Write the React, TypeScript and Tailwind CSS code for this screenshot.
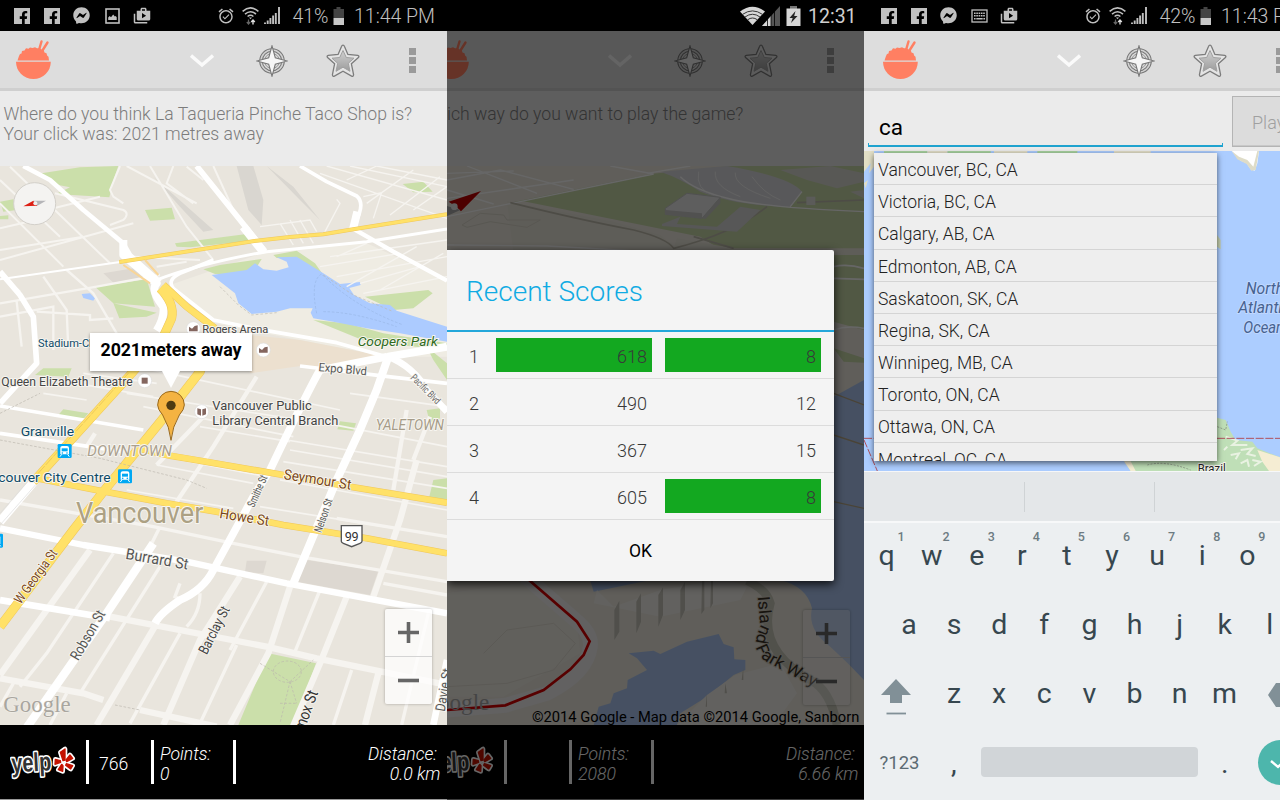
import React from "react";
import { FaFacebookF, FaFacebookMessenger } from "react-icons/fa";
import { MdAlarmOn, MdShop2 } from "react-icons/md";

/* ---------- status bar ---------- */

function FacebookBadge() {
  return (
    <div className="relative h-4 w-4 shrink-0 overflow-hidden bg-[#c0c0c0] text-black">
      <FaFacebookF className="absolute left-[4px] top-[3px] h-[14px] w-[11px]" />
    </div>
  );
}

function PictureIcon() {
  return (
    <svg className="h-4 w-[15px] shrink-0" viewBox="0 0 15 16">
      <rect x="1" y="1" width="13" height="14" fill="none" stroke="#c0c0c0" strokeWidth="1.6" />
      <path d="M3.2 12V9.6l1.5-1.7 1.3 1.3 2.2-2.6 1.6 2 .9-.7 1 1.4V12z" fill="#c0c0c0" />
    </svg>
  );
}

function KeyboardIcon() {
  return (
    <svg className="h-4 w-[17px] shrink-0" viewBox="0 0 17 16">
      <rect x="1" y="2" width="15" height="12" fill="none" stroke="#c0c0c0" strokeWidth="1.3" />
      <path d="M3 5.2h11M3 7.8h11" stroke="#c0c0c0" strokeWidth="1.5" strokeDasharray="1.6 .7" />
      <path d="M3 10.7h11" stroke="#c0c0c0" strokeWidth="1.5" strokeDasharray="1.6 .7 6.4 .7 1.6" />
    </svg>
  );
}

function WifiTransfer() {
  return (
    <svg className="h-[18px] w-[17px] shrink-0" viewBox="0 0 17 18">
      <g fill="none" stroke="#c0c0c0" strokeWidth="1.5">
        <path d="M.6 4.4Q8.5-2.6 16.4 4.4" />
        <path d="M3 7.1q5.5-4.8 11 0" />
        <path d="M5.6 9.5q2.9-2.4 5.8 0" />
      </g>
      <path d="M7 10.5h3l-1.5 1.8z" fill="#c0c0c0" />
      <path d="M6.5 12.5V17M4.8 15l1.7 2 1.7-2" fill="none" stroke="#666" strokeWidth="1.2" />
      <path d="M11 17.4v-4M9.2 15l1.8-2 1.8 2" fill="none" stroke="#ddd" strokeWidth="1.4" />
    </svg>
  );
}

function SignalBars() {
  return (
    <svg className="h-[17px] w-[17px] shrink-0" viewBox="0 0 17 17">
      <path
        d="M1 17v-1.5M3.7 17v-3.5M6.4 17v-6M9.1 17V8.5M11.8 17V6M15 17V0"
        stroke="#c0c0c0"
        strokeWidth="1.9"
      />
    </svg>
  );
}

function SamsungStatus({ battery, time, middle }: { battery: string; time: string; middle: React.ReactNode }) {
  return (
    <div className="flex h-[31px] w-[447px] shrink-0 items-center bg-black pl-[14px] text-[#c0c0c0]">
      <FacebookBadge />
      <div className="w-[14px] shrink-0" />
      <FacebookBadge />
      <FaFacebookMessenger className="ml-[13px] h-[17px] w-[17px] shrink-0" />
      <div className="ml-[14px] flex w-[17px] shrink-0 justify-center">{middle}</div>
      <MdShop2 className="ml-[12px] h-[18px] w-[18px] shrink-0" />
      <MdAlarmOn className="ml-[66px] h-[18px] w-[18px] shrink-0" />
      <div className="ml-[7px] flex shrink-0">
        <WifiTransfer />
      </div>
      <div className="ml-[5px] flex shrink-0">
        <SignalBars />
      </div>
      <span className="ml-[11.5px] mt-[2px] w-[40px] shrink-0 whitespace-nowrap text-[19.5px] font-light leading-none tracking-[-0.1px]">
        {battery}
      </span>
      <svg className="h-[18px] w-3 shrink-0" viewBox="0 0 12 18">
        <path d="M3.5 0h4v2H11v9H.5V2h3z" fill="#444" />
        <path d="M.5 11H11v7H.5z" fill="#c8c8c8" />
      </svg>
      <span className="ml-[9.5px] mt-[2px] shrink-0 whitespace-nowrap text-[19.5px] font-light leading-none">{time}</span>
    </div>
  );
}

function NexusStatus() {
  return (
    <div className="flex h-[31px] w-[417px] shrink-0 items-center bg-black pl-[293px] text-[#cfcfcf]">
      <svg className="h-5 w-10 shrink-0" viewBox="0 0 40 20">
        <path d="M0 5.5Q12.5-4 25 5.5L12.5 19z" fill="#d6d6d6" />
        <path d="M2.5 8.4q10-7 20 0M5 11q7.5-5.5 15 0M7.6 13.8q4.9-3.6 9.8 0" fill="none" stroke="#333" strokeWidth="1" />
        <path d="M22 20 40 0v20z" fill="#555" />
        <path d="M22 20l9-10v10z" fill="#d6d6d6" />
        <path d="M27.5 20V9M31 20V5M34.5 20V2" stroke="#000" strokeWidth=".8" />
      </svg>
      <svg className="ml-[6px] h-5 w-[15px] shrink-0" viewBox="0 0 15 20">
        <path d="M4 0h7v3H4z" fill="#777" />
        <path d="M.5 2.5h14V20H.5z" fill="#d6d6d6" />
        <path d="M9.500 5 3.500 12h3.200L5 17l6.500-7H8.200z" fill="#222" />
      </svg>
      <span className="ml-[7px] mt-[2px] text-[19.5px] leading-none">12:31</span>
    </div>
  );
}

/* ---------- action bar ---------- */

function Bowl() {
  return (
    <svg className="h-[40px] w-[36px] shrink-0" viewBox="0 0 36 40">
      <path d="M25.5 1.5 23 10M31.500 2.500 25.500 12" stroke="#ff7f62" strokeWidth="2.4" strokeLinecap="round" />
      <path
        d="M1.5 20.500 3 16l1-2 1.500-.5.5-2.500 2.500-.5L10 8.300l2.500.4 1.500-1.200 2.500.5L19 7.200l2 1h3l1.500 1.200 2.300.8.700 2.200 2 .8.600 2.300 1.400 1.200.500 3.800z"
        fill="#ff7f62"
      />
      <path d="M0 21.800h34.800a17.400 17.200 0 0 1-34.800 0z" fill="#ff7f62" />
    </svg>
  );
}

function CompassIcon() {
  return (
    <svg className="h-8 w-8 shrink-0" viewBox="0 0 32 32">
      <circle cx="16" cy="16" r="11" fill="none" stroke="#777" strokeWidth="3.6" />
      <circle cx="16" cy="16" r="11" fill="none" stroke="#d2d2d2" strokeWidth="1.5" />
      <circle cx="16" cy="16" r="7.5" fill="none" stroke="#999" strokeWidth="1" />
      <path
        d="M16 .8 19.300 12.700 31.200 16l-11.900 3.300L16 31.200l-3.300-11.900L.8 16l11.900-3.300z"
        fill="#f6f6f6"
        stroke="#777"
        strokeWidth="1.1"
      />
    </svg>
  );
}

function StarIcon({ id }: { id: string }) {
  return (
    <svg className="h-[34px] w-[34px] shrink-0" viewBox="0 0 34 34">
      <defs>
        <linearGradient id={id} x1="0" y1="0" x2="0" y2="1">
          <stop offset="0" stopColor="#d0d0d0" />
          <stop offset="1" stopColor="#9c9c9c" />
        </linearGradient>
      </defs>
      <path
        d="M17 1.200q1 0 1.500 1.300l3.400 8 9.800.8q2 .6.700 2.200l-7 6.300 2.200 11q-.2 2-2 1.300L17 27.200l-8.600 4.900q-1.800.7-2-1.300l2.200-11-7-6.300q-1.300-1.600.7-2.200l9.800-.8 3.400-8Q16 1.200 17 1.200z"
        fill="#e4e4e4"
        stroke="#7c7c7c"
        strokeWidth="1.3"
      />
      <path
        d="M17 6.500 20.300 13.500 28 14.200 22.300 19.300 24 27.300 17 23.200 10 27.300 11.700 19.300 6 14.200 13.700 13.500z"
        fill={`url(#${id})`}
        stroke="#a0a0a0"
        strokeWidth="1"
        strokeLinejoin="round"
      />
    </svg>
  );
}

function ActionBar({ id }: { id: string }) {
  return (
    <div className="flex h-[60px] w-[447px] shrink-0 items-center border-b-[3px] border-[#cfcfcf] bg-[#dddddd] pl-4">
      <Bowl />
      <svg className="ml-[138px] mt-[2px] h-[14px] w-6 shrink-0" viewBox="0 0 24 14">
        <path d="M1 1.500 12 11 23 1.500" fill="none" stroke="#fafafa" strokeWidth="3.4" />
      </svg>
      <div className="ml-[42px] mt-[2px] shrink-0">
        <CompassIcon />
      </div>
      <div className="ml-[37.5px] mt-[2px] shrink-0">
        <StarIcon id={id} />
      </div>
      <div className="ml-[49px] mt-[2px] flex shrink-0 flex-col gap-[2.5px]">
        <div className="h-[6.5px] w-[7px] bg-[#9a9a9a]" />
        <div className="h-[6.5px] w-[7px] bg-[#9a9a9a]" />
        <div className="h-[6.5px] w-[7px] bg-[#9a9a9a]" />
      </div>
    </div>
  );
}

/* ---------- footer ---------- */

function YelpLogo() {
  const petals = [
    "M-9-30 5-40 5-7-1-5z",
    "M8-7 20-22 28-12 10-2z",
    "M9 4 28 10 22 20 7 9z",
    "M-1 10-2 27-15 22-5 6z",
    "M-8 0-25 6-24-9-9-5z",
  ];
  return (
    <svg className="h-[38px] w-[66px] shrink-0" viewBox="0 0 198 114">
      <text
        transform="translate(5 88) rotate(-3)"
        textLength="120"
        lengthAdjust="spacingAndGlyphs"
        className="font-['Liberation_Sans',sans-serif] text-[78px] font-bold"
        fill="#333"
        stroke="#fff"
        strokeWidth="10"
        strokeLinejoin="round"
        paintOrder="stroke"
      >
        yelp
      </text>
      <g transform="translate(160 58)" strokeLinejoin="round">
        {petals.map((d) => (
          <path key={d} d={d} fill="#fff" stroke="#fff" strokeWidth="14" />
        ))}
        {petals.map((d) => (
          <path key={d} d={d} fill="#c41200" stroke="#c41200" strokeWidth="4" />
        ))}
      </g>
    </svg>
  );
}

function Footer({ count, points, distance }: { count: string; points: string; distance: string }) {
  return (
    <div className="flex h-[75px] w-[447px] shrink-0 items-start border-b border-[#999] bg-black pt-[15px] text-[17.6px] font-light leading-[20.5px] text-white">
      <div className="ml-[10px] mt-[3px]">
        <YelpLogo />
      </div>
      <div className="ml-[10px] h-11 w-[3px] shrink-0 bg-white" />
      <div className="w-[62px] pl-[10px] pt-[13.5px]">{count}</div>
      <div className="h-11 w-[3px] shrink-0 bg-white" />
      <div className="w-[79px] pl-[6px] pt-[3.5px] italic">
        Points:
        <br />
        {points}
      </div>
      <div className="h-11 w-[3px] shrink-0 bg-white" />
      <div className="ml-auto pr-[6.5px] pt-[3.5px] text-right italic">
        <span className="pr-[3.5px]">Distance:</span>
        <br />
        {distance}
      </div>
    </div>
  );
}

function ZoomControls({ faint = false }: { faint?: boolean }) {
  return (
    <div
      className={
        "flex h-[95px] w-[47px] flex-col rounded-[2px] shadow-[0_0_3px_rgba(0,0,0,0.3)] " +
        (faint ? "bg-white/30" : "bg-white/75")
      }
    >
      <div className="flex flex-1 items-center justify-center border-b border-[#d4d4d4]">
        <svg className="h-[21px] w-[21px]" viewBox="0 0 21 21">
          <path d="M10.500 0v21M0 10.500h21" stroke="#666" strokeWidth="3.6" />
        </svg>
      </div>
      <div className="flex flex-1 items-center justify-center">
        <svg className="h-[21px] w-[21px]" viewBox="0 0 21 21">
          <path d="M0 10.500h21" stroke="#666" strokeWidth="3.6" />
        </svg>
      </div>
    </div>
  );
}

/* ---------- maps ---------- */

type LabelProps = {
  x: number;
  y: number;
  size: number;
  len: number;
  fill: string;
  rotate?: number;
  italic?: boolean;
  weight?: number;
  halo?: string;
  children: string;
};

function Label({ x, y, size, len, fill, rotate = 0, italic, weight = 400, halo = "#f7f5f0", children }: LabelProps) {
  return (
    <text
      transform={`translate(${x} ${y}) rotate(${rotate})`}
      fontSize={size}
      textLength={len}
      lengthAdjust="spacingAndGlyphs"
      fontStyle={italic ? "italic" : "normal"}
      fontWeight={weight}
      fill={fill}
      stroke={halo}
      strokeWidth="6"
      strokeLinejoin="round"
      paintOrder="stroke"
    >
      {children}
    </text>
  );
}

function PlaceDot({ x, y, children }: { x: number; y: number; children: React.ReactNode }) {
  return (
    <g transform={`translate(${x} ${y})`}>
      <circle r="21" fill="#fff" stroke="#ddd" strokeWidth="2" />
      {children}
    </g>
  );
}

function TrainIcon({ x, y }: { x: number; y: number }) {
  return (
    <g transform={`translate(${x} ${y})`}>
      <rect x="-21" y="-21" width="42" height="42" rx="4" fill="#00a8f3" />
      <path d="M-13 10V-10Q-13-15-7-15H7Q13-15 13-10V10z" fill="#fff" />
      <path d="M-9-8H9V1H-9z" fill="#00a8f3" />
      <circle cx="-7" cy="6" r="2.5" fill="#00a8f3" />
      <circle cx="7" cy="6" r="2.5" fill="#00a8f3" />
      <path d="M-9 10l-5 7M9 10l5 7" stroke="#fff" strokeWidth="3" />
    </g>
  );
}

function VancouverMap() {
  return (
    <svg className="block h-[559px] w-[447px] font-[Roboto,sans-serif]" viewBox="0 18 1341 1677">
      <rect y="18" width="1341" height="1677" fill="#e9e5dd" />
      {/* pale ground and landmarks */}
      <path d="M510 375 800 275 1100 245 1341 210V380L1341 590 1160 590 640 490z" fill="#efece3" />
      <path d="M1080 240 1341 200V362z" fill="#e9e5dd" />
      <path d="M750 525 900 540 1160 590 1080 620 900 618 750 640z" fill="#ece0cf" />
      <path d="M310 340 400 325 440 350 340 368z M740 1202H800L790 1240 735 1236z M920 1200 1135 1232 1110 1305 890 1265z" fill="#ddd8d1" />
      <path d="M460 50 640 210 610 215 540 140z M710 18H760L790 120 785 195 745 150z M800 18 880 80 960 180 900 120z" fill="#d9d6d0" />
      {/* parks */}
      <g fill="#cbdfaa">
        <path d="M110 42 240 22 355 18 340 60 328 112 168 102 210 82 175 75z" />
        <path d="M0 125 40 118 50 150 10 155z M0 168 25 166V178H0z M435 150 515 143 525 178 450 182z M525 250 740 222 750 243 570 262 530 260z" />
        <path d="M1208 72 1270 65 1298 95 1240 97z M285 380 440 358 465 440 340 430z M340 430 470 458 440 470 358 475z" />
        <path d="M610 328 660 315 785 297 765 330 700 342 645 342z M820 285 890 272 945 310 970 345 880 295 830 294z" />
        <path d="M1095 410 1285 390 1298 400 1240 445 1180 450z M940 480 1040 490 1150 520 1341 550V570L1100 545z" />
        <path d="M130 625 215 625 205 650 105 645z M190 748 265 760 250 777 175 765z M1020 784 1068 790 1060 812 1012 808z" />
        <path d="M1280 750 1320 745V775L1290 790z M1300 960 1341 955V1022H1285z M805 1480 948 1510 880 1695H715z M1280 560 1341 610V660L1300 600z" />
      </g>
      {/* false creek */}
      <path
        d="M635 345 740 330 765 310 790 328 830 332 866 322 860 305 830 292 890 290 970 340 1020 372 1080 366 1082 375 1048 384 1062 405 1110 430 1170 435 1190 452 1341 500V545L1200 520 1100 505 1000 485 940 475 932 458 938 445 870 445 830 455 755 462 715 430 705 400z"
        fill="#accbff"
      />
      <path d="M245 402 270 400 285 415 280 422 250 414z" fill="#accbff" />
      <path d="M950 460Q930 360 965 342 1060 440 1210 495M970 455Q1060 455 1190 500" fill="none" stroke="#98b6e6" strokeWidth="2" strokeDasharray="8 5" />
      <path d="M660 380 715 435 755 465 830 458M970 345 1060 405 1180 455" fill="none" stroke="#bdb9b0" strokeWidth="2" strokeDasharray="8 6" />
      {/* minor streets */}
      <g fill="none" stroke="#f6f4f0" strokeWidth="6">
        <path d="M0 60 180 230M30 20 330 310M0 130 190 320M0 300 400 190M0 270 250 230M100 160 300 110M0 205 130 175M165 100 370 150Q390 160 370 180L330 195M360 18 330 90 340 110 370 130" />
        <path d="M0 430 290 380 480 345M0 470 160 440 160 570M50 425 65 560M110 455 270 465 270 480 340 475M0 345 60 395M200 330 280 400 350 520M130 350 200 450 205 570" strokeWidth="7" />
        <path d="M380 18 590 130M450 18 560 200 640 300M520 18 500 70 580 130M640 18 700 150M560 20 610 60M400 290 600 300M470 320 560 305" />
        <path d="M780 200 930 180 950 215M840 190 880 255M870 180 910 250M900 180 940 250M975 215 1020 130 1010 118M1090 110 1145 98 1120 175M980 18 1341 120M960 40 1341 175M1050 18 1341 80M1130 18 1341 60M1040 60 1130 18M1100 130 1240 30M1170 165 1320 50M1240 150 1341 80" strokeWidth="4" />
        <path d="M990 290 1130 270 1341 240M960 320 1200 280M1010 350 1341 290M1080 370 1260 320M1090 400 1341 350M1010 290 1100 250M1040 380 1250 260M1140 390 1330 280" strokeWidth="4" />
        <path d="M410 620 1020 750M250 640 470 670M230 670 460 710M380 700 900 780M430 740 880 830M600 800 870 845M440 880 800 950M470 915 760 970M380 990 700 1045M860 840 1341 920M870 870 1341 950M850 905 1341 985M840 960 1341 1050M980 790 1341 860M1050 700 1341 740M780 1040 1341 1130M130 700 260 720" strokeWidth="5" />
        <path d="M770 650 640 860 520 1040M610 770 470 915M285 820 260 860M1220 750 1180 990M1290 770 1240 900" strokeWidth="13" />
        <path d="M0 1020 460 1100 700 1150 900 1190 1341 1265M480 1100 450 1160M1150 1270 1341 1305M1010 1075 1341 1130" strokeWidth="10" />
        <path d="M330 1370 800 1460 950 1495 1341 1575M0 1555 250 1600 310 1620M420 1650 650 1700M270 1170 0 1545M470 1390 290 1695M720 1250 600 1440 490 1695M870 1280 805 1480 690 1695M1040 1310 960 1510 870 1720M1250 900 1200 1080 1120 1310M1135 1540 1095 1695" strokeWidth="19" />
        <path d="M340 1180 140 1480 60 1580M480 1220 240 1600M540 1420 390 1690M710 1455 600 1690M800 1265 690 1470M960 1290 885 1475M600 1300Q600 1360 560 1400M540 1270 525 1310 545 1320M1055 1530 1000 1695M1285 1360 1205 1695M200 1600 150 1695M40 1570 0 1640" strokeWidth="10" />
      </g>
      {/* arterials */}
      <g fill="none" stroke="#fff" strokeLinejoin="round">
        <path d="M70 18 150 60 250 150 370 250 390 285 480 365" strokeWidth="14" />
        <path d="M370 240 370 285 470 370Q450 390 490 440 495 470 470 512" strokeWidth="24" />
        <path d="M590 18 740 205 795 275" strokeWidth="17" />
        <path d="M730 200 790 275" strokeWidth="26" />
        <path d="M0 358 360 306" strokeWidth="6" />
        <path d="M0 335 60 405 100 470 110 610 0 730" strokeWidth="17" />
        <path d="M470 360Q600 310 800 275L1100 245 1341 207" strokeWidth="9" />
        <path d="M640 300 540 340Q500 360 520 385L640 480 800 512 1010 548 1160 590 1341 560" strokeWidth="11" />
        <path d="M900 18 980 65 1070 108Q1090 125 1078 160L1058 210" strokeWidth="11" />
        <path d="M1072 155 1058 212" strokeWidth="24" />
        <path d="M1058 205 1180 275 1341 362" strokeWidth="13" />
        <path d="M900 618 1165 650 1341 670M0 738 430 810M0 820 370 875" strokeWidth="11" />
        <path d="M1160 590 960 630Q925 690 810 930L760 1010 640 1230Q610 1290 540 1320 480 1360 465 1390" strokeWidth="23" />
        <path d="M1341 560 1165 590 1130 690 1080 810 1010 960 880 1270" strokeWidth="24" />
        <path d="M1165 590Q1240 620 1280 690L1341 755M0 1320 330 1375M1341 1500 1300 1695" strokeWidth="20" />
        <path d="M0 1105 250 1155 560 1205 860 1270 1341 1360" strokeWidth="19" />
        <path d="M460 1150 320 1360 75 1710" strokeWidth="25" />
        <path d="M110 955 0 1085" strokeWidth="26" />
      </g>
      <path d="M115 965 0 1095M100 945 0 1060" stroke="#ddd" strokeWidth="2" />
      {/* highways */}
      <g fill="none" stroke="#f0c75a" strokeLinejoin="round">
        <path d="M358 306 595 269 770 242 870 231 970 223 1060 208 1341 163" strokeWidth="12" />
        <path d="M480 385Q525 430 515 475L490 530 395 640 100 965" strokeWidth="27" />
        <path d="M490 375 560 440 645 505" strokeWidth="22" />
        <path d="M645 505 600 635 510 750 310 995 220 1110 0 1400" strokeWidth="28" />
        <path d="M400 862 510 887 600 902 850 945 1060 982 1341 1028M110 955 300 992 500 1030 650 1055 850 1095 1100 1135 1341 1180" strokeWidth="20" />
      </g>
      <g fill="none" stroke="#ffe168" strokeLinejoin="round">
        <path d="M358 306 595 269 770 242 870 231 970 223 1060 208 1341 163" strokeWidth="9" />
        <path d="M480 385Q525 430 515 475L490 530 395 640 100 965" strokeWidth="24" />
        <path d="M490 375 560 440 645 505" strokeWidth="19" />
        <path d="M645 505 600 635 510 750 310 995 220 1110 0 1400" strokeWidth="25" />
        <path d="M400 862 510 887 600 902 850 945 1060 982 1341 1028M110 955 300 992 500 1030 650 1055 850 1095 1100 1135 1341 1180" strokeWidth="17" />
        <path d="M370 315 450 370M435 300 475 345" stroke="#f9d596" strokeWidth="6" />
      </g>
      <path d="M385 640 110 945" stroke="#e5bd52" strokeWidth="2" strokeDasharray="30 4" />
      <g fill="none" stroke="#bbb7ae" strokeWidth="2" strokeDasharray="8 5">
        <path d="M0 840 300 895 560 960 620 985M0 760 120 700M345 1635 420 1650M780 1510 870 1565 840 1690M870 1565 940 1500M870 1565 890 1630M840 1630H890" />
        <ellipse cx="862" cy="1535" rx="42" ry="32" />
      </g>

      {/* labels */}
      <Label x={607} y={519} size={32} len={198} fill="#444">Rogers Arena</Label>
      <PlaceDot x={580} y={506}>
        <path d="M-13-6 -4 0 4-8 13-10V8H-13z" fill="#84665f" />
      </PlaceDot>
      <PlaceDot x={790} y={570}>
        <path d="M-13-6 -4 0 4-8 13-10V8H-13z" fill="#84665f" />
      </PlaceDot>
      <Label x={114} y={560} size={35} len={216} fill="#0d4a68">Stadium-China</Label>
      <Label x={1073} y={559} size={40} len={240} fill="#2f6b1d" italic>Coopers Park</Label>
      <Label x={955} y={633} size={35} len={145} fill="#555" rotate={5}>Expo Blvd</Label>
      <Label x={1230} y={655} size={30} len={112} fill="#666" rotate={45}>Pacific Blvd</Label>
      <Label x={4} y={677} size={39} len={394} fill="#444">Queen Elizabeth Theatre</Label>
      <PlaceDot x={434} y={662}>
        <rect x="-9" y="-9" width="18" height="18" fill="#84665f" />
      </PlaceDot>
      <PlaceDot x={605} y={755}>
        <path d="M-13-10 -2-7V12L-13 8zM13-10 2-7V12L13 8z" fill="#84665f" />
      </PlaceDot>
      <Label x={637} y={750} size={41} len={298} fill="#444">Vancouver Public</Label>
      <Label x={637} y={796} size={41} len={378} fill="#444">Library Central Branch</Label>
      <Label x={62} y={827} size={41} len={160} fill="#0d4a68">Granville</Label>
      <TrainIcon x={194} y={873} />
      <Label x={262} y={889} size={46} len={254} fill="#aaa08e" italic>DOWNTOWN</Label>
      <Label x={1127} y={811} size={45} len={205} fill="#a59b88" italic>YALETOWN</Label>
      <Label x={-28} y={966} size={41} len={360} fill="#0d4a68">ncouver City Centre</Label>
      <TrainIcon x={375} y={949} />
      <TrainIcon x={-12} y={1142} />
      <Label x={228} y={1088} size={88} len={382} fill="#aca184">Vancouver</Label>
      <Label x={850} y={957} size={43} len={204} fill="#7a4715" rotate={9}>Seymour St</Label>
      <Label x={657} y={1074} size={43} len={150} fill="#7a4715" rotate={9}>Howe St</Label>
      <Label x={762} y={1044} size={34} len={100} fill="#555" rotate={-66}>Smithe St</Label>
      <Label x={964} y={1120} size={34} len={105} fill="#555" rotate={-71}>Nelson St</Label>
      <g transform="translate(1055 1128)">
        <path d="M-31-31H31V16Q31 20 25 22L0 32-25 22Q-31 20-31 16z" fill="#fff" stroke="#555" strokeWidth="4" />
        <text y="15" textAnchor="middle" fontSize="38" fill="#333" textLength="42">99</text>
      </g>
      <Label x={375} y={1196} size={46} len={190} fill="#555" rotate={10}>Burrard St</Label>
      <Label x={62} y={1334} size={40} len={190} fill="#7a4715" rotate={-54}>W Georgia St</Label>
      <Label x={235} y={1504} size={44} len={165} fill="#555" rotate={-60}>Robson St</Label>
      <Label x={620} y={1486} size={43} len={155} fill="#444" rotate={-63}>Barclay St</Label>
      <Label x={895} y={1762} size={48} len={175} fill="#333" rotate={-70}>Comox St</Label>
      <Label x={1334} y={1656} size={42} len={130} fill="#555" rotate={-80}>Davie St</Label>
      <text x="10" y="1655" fontSize="68" textLength="202" lengthAdjust="spacingAndGlyphs" fill="#a9a69f" stroke="#f3f1ec" strokeWidth="3" paintOrder="stroke" className="font-['Liberation_Serif',serif]">
        Google
      </text>

      {/* compass */}
      <circle cx="104" cy="131" r="63" fill="#f4f3f1" stroke="#d3d0ca" strokeWidth="3" />
      <path d="M70 139 100 122 112 137z" fill="#dd1f14" />
      <path d="M100 122 138 122 112 137z" fill="#b5b5b8" />
      <circle cx="106" cy="130" r="6" fill="#eee" />

      {/* marker */}
      <path d="M513 841Q509 800 488 765 473 748 473 735A40 41 0 0 1 553 735Q553 748 538 765 517 800 513 841z" fill="#f4b342" stroke="#99691d" strokeWidth="3" />
      <circle cx="513" cy="736" r="14" fill="#4d3a12" />
    </svg>
  );
}

function IslandMap() {
  return (
    <svg className="block h-[559px] w-[417px] font-[Roboto,sans-serif]" viewBox="0 498 1251 1677">
      <defs>
        <path id="island-park-way" d="M932 1790 940 1880Q905 1960 965 1988 1040 2030 1135 2078" />
      </defs>
      <rect y="498" width="1251" height="1677" fill="#efebe1" />
      <path d="M190 608 610 522 850 498H1251V990L1160 965 760 710 230 604z" fill="#cadbaa" />
      <path d="M640 515 840 498Q1030 530 1065 575L1030 622Q860 615 760 575 700 535 640 515z" fill="#dddde0" />
      <path d="M1000 510 1150 498 1251 520V545L1170 565 1080 540z M1210 575 1251 570V595z" fill="#dddcd4" />
      <path d="M180 604 500 665 640 705 690 745 1251 745V765H200z M690 715 860 745H680z" fill="#ece8dc" />
      <g fill="none" stroke="#fff" strokeWidth="4">
        <path d="M0 540 160 510 380 568M0 595 380 540M0 650 620 522 490 498M270 580 60 498M0 520 200 513M600 520 730 498M0 570 140 612M700 530Q740 570 850 597 950 622 1251 635M1030 620 1065 575M0 735 300 738 700 760" />
        <path d="M755 515Q745 570 800 585M805 515Q800 560 880 590M865 518Q860 560 970 595M915 530Q950 580 1000 600" strokeWidth="2" />
      </g>
      <path d="M190 608Q400 660 560 690 660 715 680 745 860 700 960 620M740 710 860 745M1251 600 1050 608" fill="none" stroke="#c1bdae" strokeWidth="5" />
      <path d="M655 625 720 580 820 592 765 655 655 643z" fill="#ebebeb" stroke="#c9c9c9" strokeWidth="3" />
      <path d="M765 655 820 592V610L775 657z M655 630 765 640V655L655 643z" fill="#cacac8" />
      <path d="M645 672 700 650 690 672 810 680 880 620 940 630 870 695 645 678z" fill="#d9d9d9" />
      <path d="M1078 590H1105V615H1078z" fill="#e3e3de" />
      <path d="M45 675 100 640 170 645 180 660 280 660 240 682 130 665 60 682z" fill="none" stroke="#ddd9cc" strokeWidth="3" />
      <path d="M5 605 102 573 42 634 28 620z" fill="#c00000" />
      <path d="M0 618 40 630 0 648z" fill="#aaa" />
      <circle cx="22" cy="620" r="10" fill="#eee" />
      {/* strip beside the dialog */}
      <path d="M1160 1190 1251 1140V1750L1160 1760z" fill="#afc9f5" />
      <path d="M1160 1045 1251 1075V1088L1190 1085z" fill="#cadbaa" />
      <path d="M1160 800Q1200 790 1251 805M1160 835 1251 838M1160 990Q1200 975 1251 985" fill="none" stroke="#fff" strokeWidth="5" />
      <path d="M1160 1180 1251 1215M1160 1305 1251 1335M1160 1505 1251 1525" stroke="#b7a88a" strokeWidth="4" />
      {/* lower half */}
      <path d="M1000 1740H1251V2040Q1200 1985 1150 1940 1080 1890 1095 1825 1080 1760 1000 1740z M440 1775 600 1742H430z" fill="#afc9f5" />
      <path
        d="M545 1960 620 1952 640 1962 720 1925 815 1902 830 1932 860 1942 862 1978 895 1980V2010L860 2025 780 2090 700 2140 690 2175H440L455 2120 490 2110 500 2080 540 2065 542 2040 600 2010 570 1975z"
        fill="#afc9f5"
      />
      <path d="M500 1820 640 1770 800 1742 850 1742 900 1760 880 1800 640 1850 440 1810 450 1770z M865 2025 1000 1990 1050 2080 980 2175H690L780 2085z" fill="#f5f3ed" />
      <path d="M502 1830 517 1802V1895L502 1920zM568 1805 582 1780V1865L568 1900zM634 1785 648 1762V1845L634 1880zM700 1770 714 1745V1830L700 1860zM765 1742H772V1830L763 1842zM792 1742H798V1810L790 1825zM835 2050 840 2080H833zM889 2000V2040H884zM780 2080V2120H776z" fill="#c8c5bb" />
      <path d="M0 1780 240 1745 390 1870 400 1960 170 2090 0 2090z" fill="#f5f2ea" opacity=".6" />
      <path d="M110 1960 180 1890 320 1870 385 1930 320 2010 180 2050 0 2060" fill="none" stroke="#e4e0d5" strokeWidth="3" />
      <path d="M235 1730 385 1860Q435 1900 430 1940 420 2020 300 2080L175 2116 0 2130" fill="none" stroke="#f4f2f2" strokeWidth="45" />
      <path d="M240 1735 390 1865 428 1924 410 1965 370 2008 290 2070 175 2116 0 2130" fill="none" stroke="#d90000" strokeWidth="8" />
      <path d="M900 1742Q960 1770 970 1810 930 1950 1090 2040 1150 2070 1170 2175" fill="none" stroke="#cbcabb" strokeWidth="26" />
      <text fontSize="50" fill="#3b3226" stroke="#d5d1c5" strokeWidth="6" paintOrder="stroke">
        <textPath href="#island-park-way" textLength="370" lengthAdjust="spacingAndGlyphs">
          Island Park Way
        </textPath>
      </text>
      <text x="-77" y="2130" fontSize="68" textLength="204" lengthAdjust="spacingAndGlyphs" fill="#aaa" className="font-['Liberation_Serif',serif]">
        Google
      </text>
      <text x="255" y="2166" fontSize="44" textLength="982" lengthAdjust="spacingAndGlyphs" fill="#000">
        ©2014 Google - Map data ©2014 Google, Sanborn
      </text>
    </svg>
  );
}

function AtlanticMap() {
  return (
    <svg className="block h-[320px] w-[416px] font-[Roboto,sans-serif]" viewBox="0 453 1248 960">
      <rect y="453" width="1248" height="960" fill="#accdff" />
      <path d="M0 453H30V500L15 520 20 490 0 515z M0 550 12 540 5 565z" fill="#e2dfc6" />
      <path d="M60 453H190V462H60z M250 453H380V462H250z M520 453H640V462H520z" fill="#a9d3a0" />
      <path d="M190 453H250V460H190z M390 453H490V460H390z M750 453H860V459H750z" fill="#e3dfc9" />
      <path d="M1103 453H1185L1180 490 1172 512 1160 508 1148 490 1130 482z" fill="#fff" />
      <path d="M1103 453 1120 478 1148 492 1162 512 1175 510 1185 453H1180L1168 500 1150 480 1125 470z" fill="#dedcc8" />
      <path d="M1059 705 1070 720V748L1059 740z" fill="#c5cfae" />
      <path d="M780 1384 1059 1380V1253L1085 1260 1100 1295 1115 1320 1165 1325 1180 1345 1248 1372V1413H800z" fill="#bfdfb7" />
      <path d="M780 1384 800 1384 815 1413H800z M1180 1350 1248 1372V1413H1215L1195 1385z" fill="#f5edd3" />
      <path
        d="M1085 1310 1120 1322 1105 1335 1150 1335M1130 1350 1165 1345 1150 1362 1175 1368M1165 1380 1190 1385 1170 1398M1100 1365 1125 1360 1115 1378M1130 1390 1150 1380 1155 1400M1080 1350 1090 1340"
        fill="none"
        stroke="#e9f2e2"
        strokeWidth="6"
      />
      <path d="M850 1395Q900 1380 980 1410M1060 1280 1085 1290 1090 1265" fill="none" stroke="#7b8177" strokeWidth="2" strokeDasharray="6 4" />
      <path d="M0 1315H30M1059 1315H1248M0 1320 40 1413" stroke="#b0505c" strokeWidth="3" strokeDasharray="24 5" />
      <Label x={1145} y={881} size={48} len={115} fill="#47628f" italic halo="#c0d8ff">North</Label>
      <Label x={1123} y={940} size={48} len={155} fill="#47628f" italic halo="#c0d8ff">Atlantic</Label>
      <Label x={1138} y={998} size={48} len={122} fill="#47628f" italic halo="#c0d8ff">Ocean</Label>
      <Label x={1001} y={1419} size={38} len={84} fill="#222">Brazil</Label>
    </svg>
  );
}

/* ---------- dialog ---------- */

const scores = [
  { n: 1, points: "618", misses: "8", a: true, b: true },
  { n: 2, points: "490", misses: "12", a: false, b: false },
  { n: 3, points: "367", misses: "15", a: false, b: false },
  { n: 4, points: "605", misses: "8", a: false, b: true },
];

function ScoresDialog() {
  return (
    <div className="absolute left-0 top-[249.5px] z-10 flex h-[331px] w-[387px] flex-col rounded-r-[2px] bg-[#f4f4f4] shadow-[0_3px_10px_rgba(0,0,0,0.85)]">
      <div className="flex h-[82.5px] items-center border-b-2 border-[#24a7da] pl-[19px] pt-[4px] text-[28px] font-light text-[#10abe3]">
        Recent Scores
      </div>
      {scores.map((s) => (
        <div key={s.n} className="flex h-[47px] items-center border-b border-[#dcdcdc] text-[18px] font-light text-[#383838]">
          <div className="w-[49px] pl-[22px] pt-[3px]">{s.n}</div>
          <div className={"flex h-[34px] w-[156px] items-center justify-end pr-[5px] pt-[3px] " + (s.a ? "bg-[#13a820]" : "")}>
            {s.points}
          </div>
          <div className={"ml-[13px] flex h-[34px] w-[156px] items-center justify-end pr-[5px] pt-[3px] " + (s.b ? "bg-[#13a820]" : "")}>
            {s.misses}
          </div>
        </div>
      ))}
      <div className="flex flex-1 items-center justify-center pt-[2px] text-[17.5px] text-black">OK</div>
    </div>
  );
}

/* ---------- keyboard ---------- */

const cities = [
  "Vancouver, BC, CA",
  "Victoria, BC, CA",
  "Calgary, AB, CA",
  "Edmonton, AB, CA",
  "Saskatoon, SK, CA",
  "Regina, SK, CA",
  "Winnipeg, MB, CA",
  "Toronto, ON, CA",
  "Ottawa, ON, CA",
  "Montreal, QC, CA",
];

function Key({ label, hint }: { label: string; hint?: string }) {
  return (
    <div className="relative flex h-full w-[45.1px] shrink-0 items-center justify-center">
      {hint && <span className="absolute right-[4.5px] top-[7.5px] text-[12.5px] font-medium leading-none text-[#6d7b82]">{hint}</span>}
      {label}
    </div>
  );
}

function Keyboard() {
  return (
    <div className="flex h-[329px] w-[460px] flex-col bg-[#eceff1] text-[28.5px] leading-none text-[#37474f]">
      <div className="flex h-[52px] shrink-0 items-center border-b-2 border-t border-[#f7f8f9] bg-[#e4e7e9]">
        <div className="h-[30px] w-[161px] border-r border-[#cfd3d5]" />
        <div className="h-[30px] w-[130px] border-r border-[#cfd3d5]" />
      </div>
      <div className="flex h-[67px] shrink-0">
        {"qwertyuiop".split("").map((k, i) => (
          <Key key={k} label={k} hint={String((i + 1) % 10)} />
        ))}
      </div>
      <div className="flex h-[70px] shrink-0 pl-[22.5px]">
        {"asdfghjkl".split("").map((k) => (
          <Key key={k} label={k} />
        ))}
      </div>
      <div className="flex h-[69px] shrink-0 items-center">
        <svg className="ml-[17px] mr-[20.5px] mt-[5px] h-[37px] w-[30px] shrink-0" viewBox="0 0 30 37">
          <path d="M15 0 30 16H21V24H9V16H0z" fill="#819097" />
          <path d="M5.500 34.500h19.500" stroke="#819097" strokeWidth="1.8" />
        </svg>
        {"zxcvbnm".split("").map((k) => (
          <Key key={k} label={k} />
        ))}
        <svg className="ml-[21px] h-[24px] w-[32px] shrink-0" viewBox="0 0 32 24">
          <path d="M0 12 8 0H32V24H8z" fill="#819097" />
          <path d="M13 7 23 17M23 7 13 17" stroke="#eceff1" strokeWidth="2.5" />
        </svg>
      </div>
      <div className="flex h-[71px] shrink-0 items-center">
        <span className="-mt-[3px] w-[68px] pl-[15.5px] text-[18.5px] text-[#5c6b73]">?123</span>
        <span className="w-[49px] pl-[19px]">,</span>
        <div className="mt-[-5px] h-[30px] w-[217px] rounded-[4px] bg-[#d1d5d8]" />
        <span className="w-[60px] pl-[23px]">.</span>
        <div className="-mt-[5px] flex h-[45px] w-[45px] items-center justify-center rounded-full bg-[#4db6ac]">
          <svg className="h-4 w-[22px]" viewBox="0 0 22 16">
            <path d="M1 7 8 13 21 1" fill="none" stroke="#fff" strokeWidth="2.4" />
          </svg>
        </div>
      </div>
    </div>
  );
}

/* ---------- screens ---------- */

function GuessScreen() {
  return (
    <section className="flex w-[447px] shrink-0 flex-col overflow-hidden">
      <SamsungStatus battery="41%" time="11:44 PM" middle={<PictureIcon />} />
      <ActionBar id="star-guess" />
      <div className="h-[75px] shrink-0 whitespace-nowrap bg-[#ebebeb] pl-[3.5px] pt-[12.5px] text-[17.6px] font-light leading-[20.5px] text-[#7c7c7c]">
        Where do you think La Taqueria Pinche Taco Shop is?
        <br />
        Your click was: 2021 metres away
      </div>
      <div className="relative h-[559px] shrink-0">
        <VancouverMap />
        <div className="absolute left-[90px] top-[167px] flex h-[38px] w-[162px] items-center justify-center bg-white pb-[4px] text-[17.8px] font-bold tracking-[-0.1px] text-black shadow-[0_1px_3px_rgba(0,0,0,0.4)]">
          2021meters away
          <svg className="absolute left-[72px] top-[37.5px] h-[17px] w-[18px]" viewBox="0 0 18 17">
            <path d="M0 0H18L9 17z" fill="#fff" />
          </svg>
        </div>
        <div className="absolute left-[385px] top-[443px]">
          <ZoomControls />
        </div>
      </div>
      <Footer count="766" points="0" distance="0.0 km" />
    </section>
  );
}

function ScoresScreen() {
  return (
    <section className="relative flex w-[417px] shrink-0 flex-col overflow-hidden">
      <NexusStatus />
      <div className="relative flex h-[769px] flex-col">
        <div className="-ml-[29px]">
          <ActionBar id="star-scores" />
        </div>
        <div className="-ml-[12px] h-[75px] shrink-0 whitespace-nowrap bg-[#ebebeb] pt-[12.5px] text-[17.6px] font-light leading-[20.5px] text-[#828282]">
          <span className="-ml-[13.5px]">Which way do you want to play the game?</span>
        </div>
        <div className="relative h-[559px] shrink-0">
          <IslandMap />
          <div className="absolute left-[356px] top-[444px]">
            <ZoomControls faint />
          </div>
        </div>
        <div className="-ml-[29px]">
          <Footer count="" points="2080" distance="6.66 km" />
        </div>
        <div className="absolute inset-0 bg-black/60" />
      </div>
      <ScoresDialog />
    </section>
  );
}

function SearchScreen() {
  return (
    <section className="flex w-[416px] shrink-0 flex-col overflow-hidden bg-[#dddddd]">
      <div className="bg-black pl-[3px]">
        <SamsungStatus battery="42%" time="11:43 PM" middle={<KeyboardIcon />} />
      </div>
      <div className="flex">
        <div className="h-[60px] w-[3px] shrink-0 border-b-[3px] border-[#cfcfcf]" />
        <ActionBar id="star-search" />
      </div>
      <div className="flex h-[60px] w-[450px] shrink-0 bg-[#ebebeb] pl-[4px]">
        <div className="mt-[12px] flex h-[44px] w-[355px] shrink-0 flex-col">
          <div className="flex-1 pl-[11px] pt-[8px] text-[22.5px] leading-[32px] text-black">ca</div>
          <div className="h-[5.5px] border-x-[1.5px] border-b-2 border-[#1fa3cf]" />
        </div>
        <div className="ml-[9px] mt-[5px] flex h-[51px] w-[90px] items-center border border-[#b4b4b4] bg-[#dcdcdc] pl-[19px] pt-[2px] text-[18px] font-light text-[#a0a0a0] shadow-[inset_-1px_-1px_0_#c8c8c8]">
          Play
        </div>
      </div>
      <div className="relative h-[320px] shrink-0">
        <AtlanticMap />
        <div className="absolute left-[10px] top-[2px] h-[308px] w-[343px] overflow-hidden bg-[#eeeeee] shadow-[0_2px_6px_rgba(0,0,0,0.6)]">
          {cities.map((c) => (
            <div key={c} className="flex h-[32.2px] items-center border-b border-[#d4d4d4] pl-[4px] pt-[3px] text-[17.5px] font-light text-[#222]">
              {c}
            </div>
          ))}
        </div>
      </div>
      <Keyboard />
    </section>
  );
}

export default function App() {
  return (
    <main className="flex h-[800px] w-[1280px] overflow-hidden bg-black font-[Roboto,sans-serif]">
      <GuessScreen />
      <ScoresScreen />
      <SearchScreen />
    </main>
  );
}
